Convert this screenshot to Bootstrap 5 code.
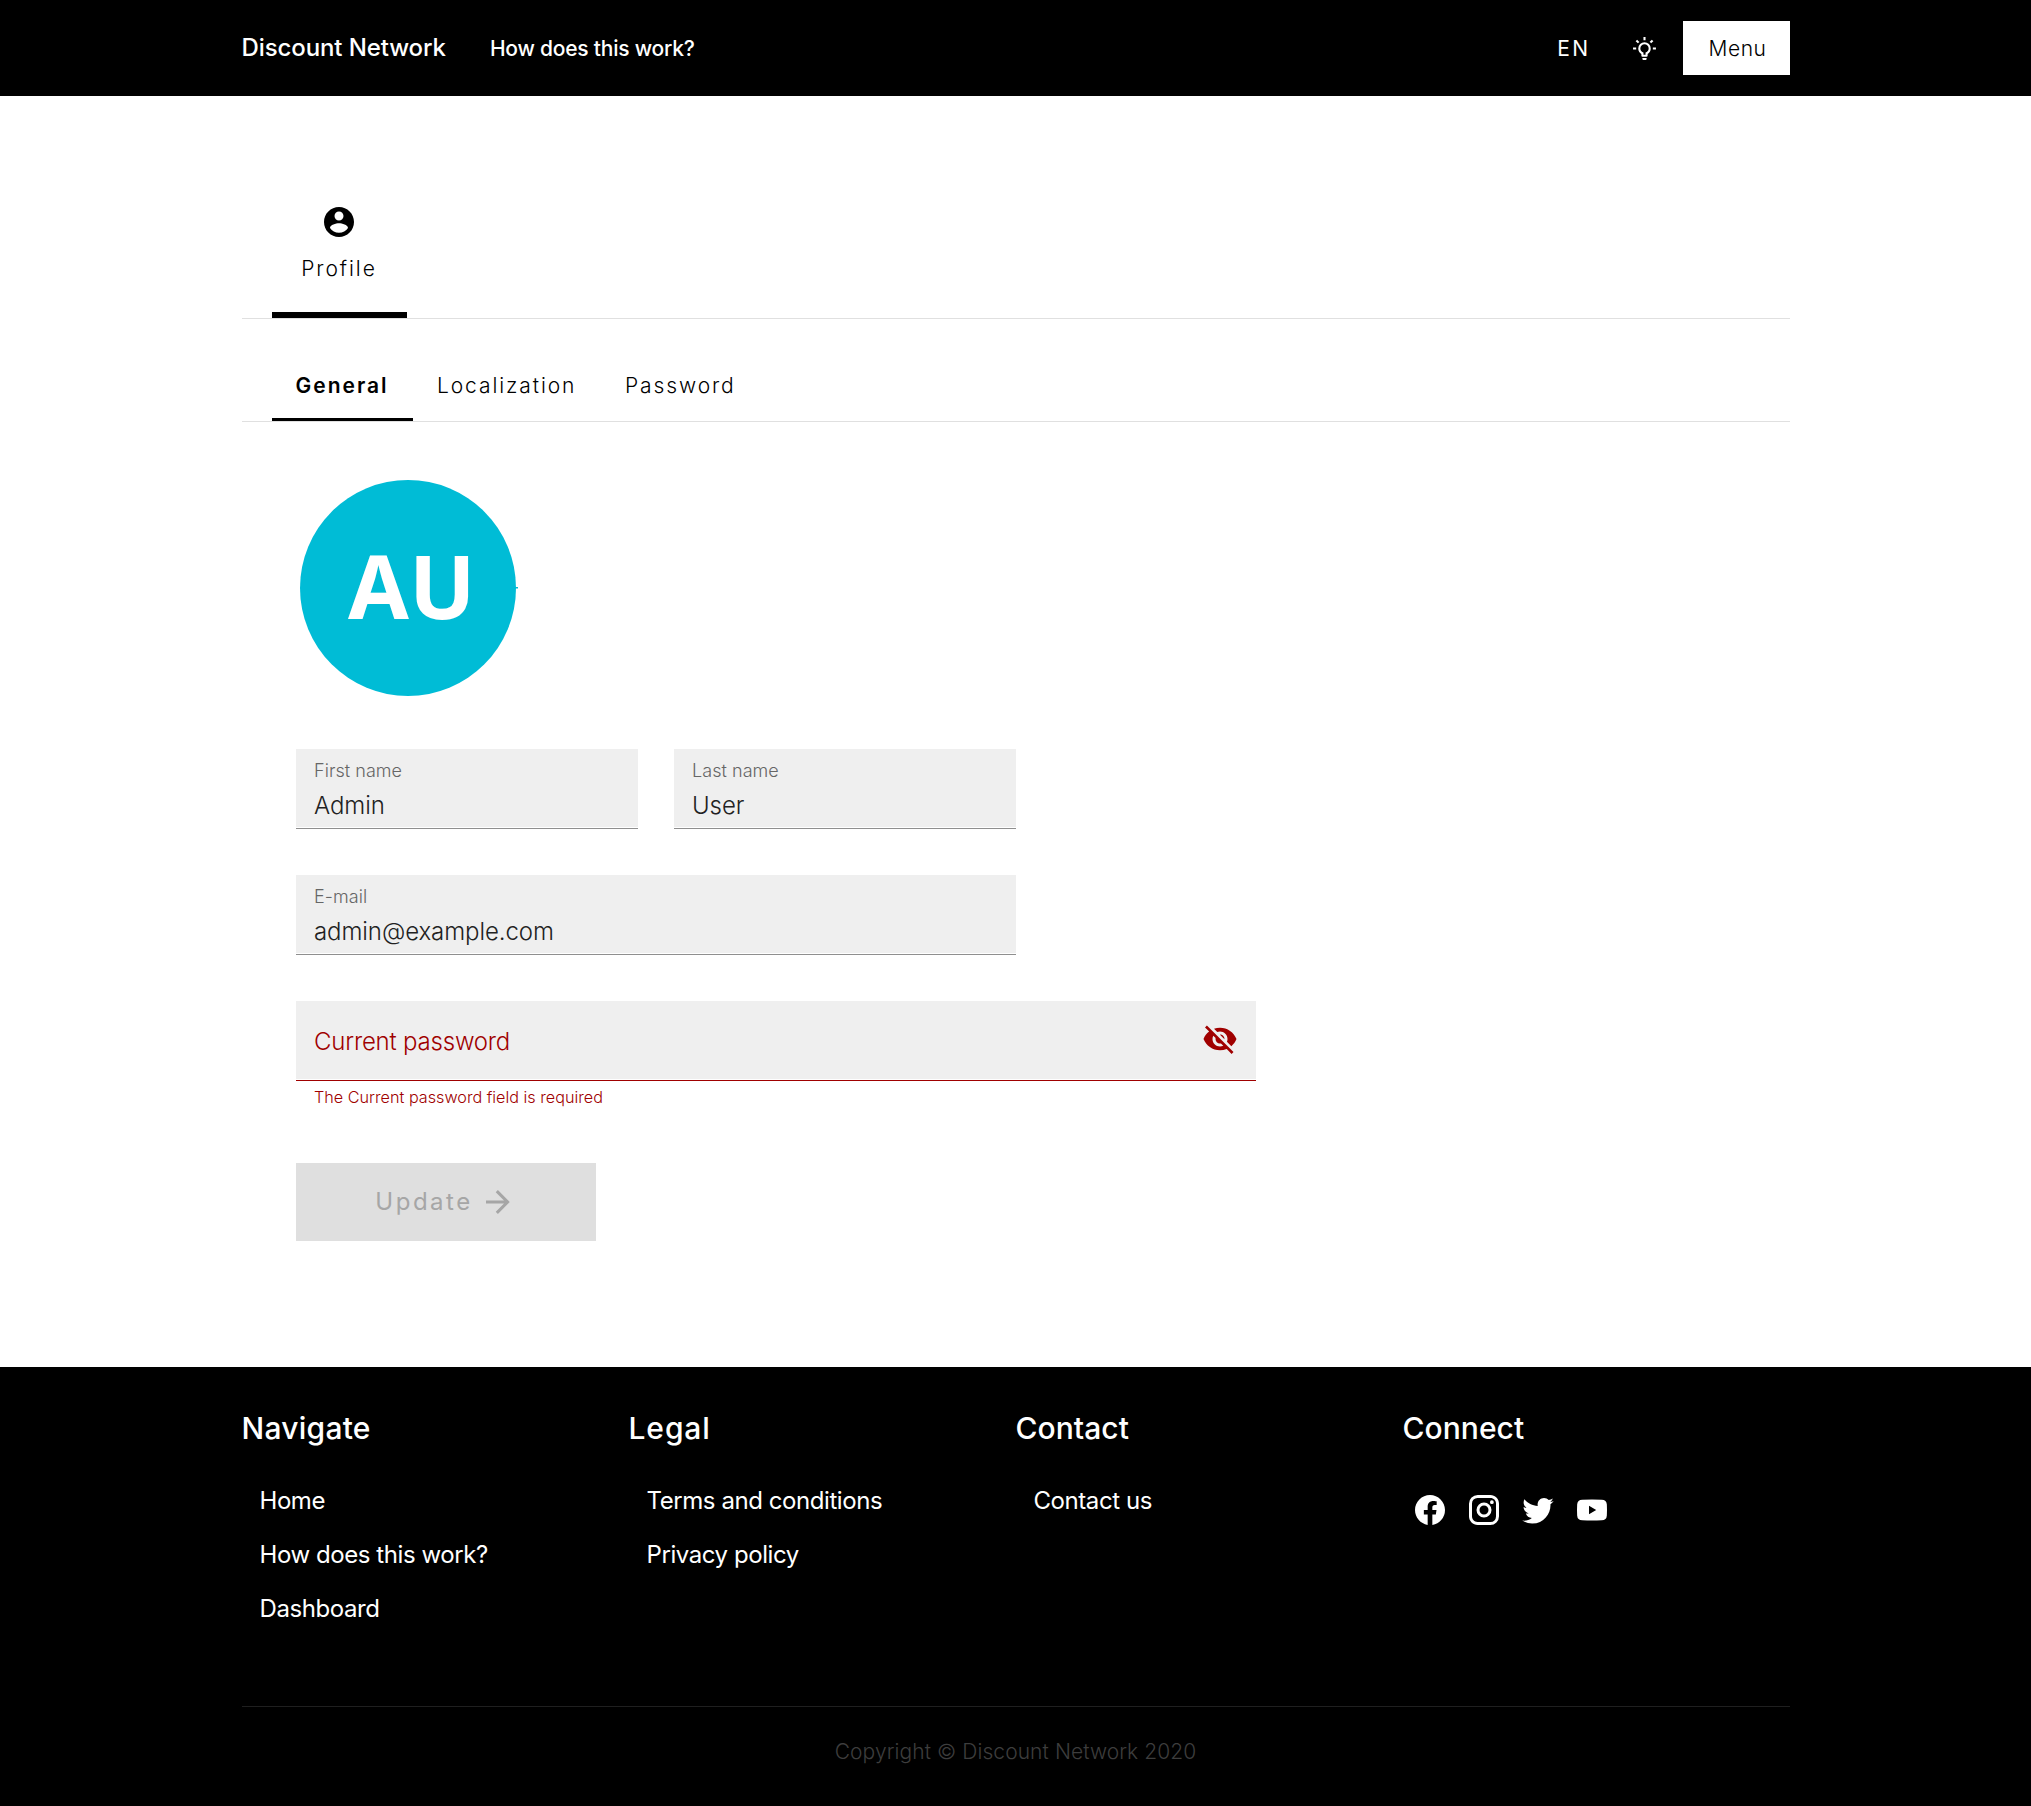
<!DOCTYPE html>
<html lang="en">
<head>
<meta charset="utf-8">
<meta name="viewport" content="width=device-width, initial-scale=1">
<title>Discount Network</title>
<link href="https://cdn.jsdelivr.net/npm/bootstrap@5.3.0/dist/css/bootstrap.min.css" rel="stylesheet">
<style>
body{font-family:Inter,Lato,sans-serif;color:#000;background:#fff;overflow-x:hidden}
a{color:inherit;text-decoration:none}
svg{display:block;flex:none;fill:currentColor}
.wrap{width:1548px;margin-left:241.5px}
.topbar{height:96px}
.brand{font-size:24px;font-weight:500;line-height:32px;letter-spacing:-.1px;margin-right:44px;padding-bottom:1px}
.toplink{font-size:21px;font-weight:500;line-height:32px;letter-spacing:-.22px;padding-top:2px}
.lang{font-size:21px;font-weight:400;line-height:32px;letter-spacing:2.4px;margin-right:41px;padding-top:2px}
.bulb{margin-right:26px}
.btn-menu{width:107px;height:54px;border-radius:0;background:#fff;color:#000;font-size:21px;line-height:32px;letter-spacing:.5px;font-weight:300;padding:12px 0 10px 3px;border:0}
.tabs-main{height:223px;padding:108px 0 0 30.5px;border-bottom:1px solid #e0e0e0}
.tab-main{width:135px;height:114px;border-bottom:6px solid #000;font-size:21px;line-height:30px;letter-spacing:1.95px;gap:14px;font-weight:300;padding-right:1px}
.tabs-sub{height:103px;padding:52px 0 0 30.5px;border-bottom:1px solid #e0e0e0;font-size:21px;line-height:30px;font-weight:300}
.tab-sub{height:50px;padding-left:24px;letter-spacing:1.9px}
.tab-sub.on{width:141px;font-weight:600;border-bottom:3px solid #000;letter-spacing:2px;padding-left:23.5px}
.tab-loc{width:188px}
.panel{padding:58px 0 126px 54.5px}
.avatar{margin:0 0 53px 4px}
.avatar text{font:700 88px "Noto Sans",sans-serif;fill:#fff}
.fields{gap:46px}
.fields-row{gap:36px}
.fld{height:80px;padding:10px 18px 0;background:linear-gradient(#efefef,#efefef) 0 0/100% 78px no-repeat;border-bottom:1px solid #8f8f8f;font-weight:300}
.fld label{display:block;font-size:18px;line-height:24px;color:#666;letter-spacing:.05px}
.fld .form-control{border:0;border-radius:0;background:none;box-shadow:none;padding:0;margin-top:7px;height:32px;font-size:24px;line-height:32px;font-weight:300;color:#222;letter-spacing:-.08px}
.fld-half{width:342px}
.fld-wide{width:720px}
.fld-full{width:960px;border-color:#a00000;color:#a00000;padding:0 18px}
.fld-full .form-control{color:#a00000;margin-top:2px;letter-spacing:-.2px}
.fld-full .form-control::placeholder{color:#a00000;opacity:1}
.fld-full svg{margin-bottom:3px}
.err{font-size:16.2px;line-height:24px;font-weight:300;color:#a00000;padding-left:18px;margin-top:4px;letter-spacing:0}
.btn-update{width:300px;height:78px;margin-top:54px;background:#dfdfdf;color:#a6a6a6;border:0;border-radius:0;font-size:24px;font-weight:400;line-height:32px;letter-spacing:2.5px;padding:0 1px 0 0;gap:7px}
.btn-update svg{margin-bottom:1px}
.foot{height:439px;padding-top:43px;font-weight:400}
.foot-cols{height:296px}
.foot-col{width:387px}
.foot-h{font-size:30px;line-height:36px;font-weight:500;margin:0 0 28px;letter-spacing:.05px}
.foot-h.loose{letter-spacing:.25px}
.foot-h.looser{letter-spacing:.9px}
.foot-a{display:block;font-size:24px;line-height:54px;padding-left:18px;letter-spacing:-.43px}
.social{padding-top:9px}
.social a{width:54px;height:54px}
.copy{border-top:1px solid #1f1f1f;padding-top:29px;font-size:21px;line-height:32px;font-weight:300;color:#3d3d3d;letter-spacing:.08px}
</style>
</head>
<body>
<nav class="topbar bg-black text-white">
  <div class="wrap h-100 d-flex align-items-center">
    <a href="#" class="brand">Discount Network</a>
    <a href="#" class="toplink">How does this work?</a>
    <a href="#" class="lang ms-auto">EN</a>
    <a href="#" class="bulb" aria-label="Theme"><svg width="25" height="25" viewBox="0 0 24 24"><path d="M20,11H23V13H20V11M1,11H4V13H1V11M13,1V4H11V1H13M4.92,3.5L7.05,5.64L5.63,7.05L3.5,4.93L4.92,3.5M16.95,5.63L19.07,3.5L20.5,4.93L18.37,7.05L16.95,5.63M12,6A6,6 0 0,1 18,12C18,14.22 16.79,16.16 15,17.2V19A1,1 0 0,1 14,20H10A1,1 0 0,1 9,19V17.2C7.21,16.16 6,14.22 6,12A6,6 0 0,1 12,6M14,21V22A1,1 0 0,1 13,23H11A1,1 0 0,1 10,22V21H14M11,18H13V15.87C14.73,15.43 16,13.86 16,12A4,4 0 0,0 12,8A4,4 0 0,0 8,12C8,13.86 9.27,15.43 11,15.87V18Z"/></svg></a>
    <button type="button" class="btn btn-menu">Menu</button>
  </div>
</nav>
<main class="wrap">
  <div class="tabs-main">
    <a href="#" class="tab-main d-flex flex-column align-items-center"><svg width="36" height="36" viewBox="0 0 24 24"><path d="M12 2C6.48 2 2 6.48 2 12s4.48 10 10 10 10-4.48 10-10S17.52 2 12 2zm0 3c1.66 0 3 1.34 3 3s-1.34 3-3 3-3-1.34-3-3 1.34-3 3-3zm0 14.2c-2.5 0-4.71-1.28-6-3.22.03-1.99 4-3.08 6-3.08 1.99 0 5.97 1.09 6 3.08-1.29 1.94-3.5 3.22-6 3.22z"/></svg><span>Profile</span></a>
  </div>
  <div class="tabs-sub d-flex">
    <a href="#" class="tab-sub on">General</a>
    <a href="#" class="tab-sub tab-loc">Localization</a>
    <a href="#" class="tab-sub">Password</a>
  </div>
  <form class="panel">
    <svg class="avatar" width="219" height="216" viewBox="0 0 219 216"><circle cx="108" cy="108" r="108" fill="#00bcd6"/><path fill="#00bcd6" d="M215 107h3v1.5h-3z"/><text x="48" y="139">AU</text></svg>
    <div class="fields d-flex flex-column">
      <div class="fields-row d-flex">
        <div class="fld fld-half"><label for="fn">First name</label><input id="fn" class="form-control" value="Admin"></div>
        <div class="fld fld-half"><label for="ln">Last name</label><input id="ln" class="form-control" value="User"></div>
      </div>
      <div class="fld fld-wide"><label for="em">E-mail</label><input id="em" class="form-control" value="admin@example.com"></div>
      <div class="fld fld-full d-flex align-items-center"><input class="form-control" type="password" placeholder="Current password" aria-label="Current password"><svg width="36" height="36" viewBox="0 0 24 24"><path d="M12 7c2.76 0 5 2.24 5 5 0 .65-.13 1.26-.36 1.83l2.92 2.92c1.51-1.26 2.7-2.89 3.43-4.75-1.73-4.39-6-7.5-11-7.5-1.4 0-2.74.25-3.98.7l2.16 2.16C10.74 7.13 11.35 7 12 7zM2 4.27l2.28 2.28.46.46C3.08 8.3 1.78 10.02 1 12c1.73 4.39 6 7.5 11 7.5 1.55 0 3.03-.3 4.38-.84l.42.42L19.73 22 21 20.73 3.27 3 2 4.27zM7.53 9.8l1.55 1.55c-.05.21-.08.43-.08.65 0 1.66 1.34 3 3 3 .22 0 .44-.03.65-.08l1.55 1.55c-.67.33-1.41.53-2.2.53-2.76 0-5-2.24-5-5 0-.79.2-1.53.53-2.2zm4.31-.78l3.15 3.15.02-.16c0-1.66-1.34-3-3-3l-.17.01z"/></svg></div>
    </div>
    <div class="err">The Current password field is required</div>
    <button type="button" class="btn btn-update d-flex align-items-center justify-content-center">Update <svg width="36" height="36" viewBox="0 0 24 24"><path d="M4,11V13H16L10.5,18.5L11.92,19.92L19.84,12L11.92,4.08L10.5,5.5L16,11H4Z"/></svg></button>
  </form>
</main>
<footer class="foot bg-black text-white">
  <div class="wrap">
    <div class="foot-cols d-flex">
      <div class="foot-col"><h4 class="foot-h loose">Navigate</h4><a href="#" class="foot-a">Home</a><a href="#" class="foot-a">How does this work?</a><a href="#" class="foot-a">Dashboard</a></div>
      <div class="foot-col"><h4 class="foot-h looser">Legal</h4><a href="#" class="foot-a">Terms and conditions</a><a href="#" class="foot-a">Privacy policy</a></div>
      <div class="foot-col"><h4 class="foot-h">Contact</h4><a href="#" class="foot-a">Contact us</a></div>
      <div class="foot-col"><h4 class="foot-h">Connect</h4>
        <div class="social d-flex">
          <a href="#" class="d-flex align-items-center justify-content-center" aria-label="Facebook"><svg width="36" height="36" viewBox="0 0 24 24"><path d="M12 2.04C6.5 2.04 2 6.53 2 12.06C2 17.06 5.66 21.21 10.44 21.96V14.96H7.9V12.06H10.44V9.85C10.44 7.34 11.93 5.96 14.22 5.96C15.31 5.96 16.45 6.15 16.45 6.15V8.62H15.19C13.95 8.62 13.56 9.39 13.56 10.18V12.06H16.34L15.89 14.96H13.56V21.96A10 10 0 0 0 22 12.06C22 6.53 17.5 2.04 12 2.04Z"/></svg></a>
          <a href="#" class="d-flex align-items-center justify-content-center" aria-label="Instagram"><svg width="36" height="36" viewBox="0 0 24 24"><path d="M7.8,2H16.2C19.4,2 22,4.6 22,7.8V16.2A5.8,5.8 0 0,1 16.2,22H7.8C4.6,22 2,19.4 2,16.2V7.8A5.8,5.8 0 0,1 7.8,2M7.6,4A3.6,3.6 0 0,0 4,7.6V16.4C4,18.39 5.61,20 7.6,20H16.4A3.6,3.6 0 0,0 20,16.4V7.6C20,5.61 18.39,4 16.4,4H7.6M17.25,5.5A1.25,1.25 0 0,1 18.5,6.75A1.25,1.25 0 0,1 17.25,8A1.25,1.25 0 0,1 16,6.75A1.25,1.25 0 0,1 17.25,5.5M12,7A5,5 0 0,1 17,12A5,5 0 0,1 12,17A5,5 0 0,1 7,12A5,5 0 0,1 12,7M12,9A3,3 0 0,0 9,12A3,3 0 0,0 12,15A3,3 0 0,0 15,12A3,3 0 0,0 12,9Z"/></svg></a>
          <a href="#" class="d-flex align-items-center justify-content-center" aria-label="Twitter"><svg width="36" height="36" viewBox="0 0 24 24"><path d="M22.46,6C21.69,6.35 20.86,6.58 20,6.69C20.88,6.16 21.56,5.32 21.88,4.31C21.05,4.81 20.13,5.16 19.16,5.36C18.37,4.5 17.26,4 16,4C13.65,4 11.73,5.92 11.73,8.29C11.73,8.63 11.77,8.96 11.84,9.27C8.28,9.09 5.11,7.38 3,4.79C2.63,5.42 2.42,6.16 2.42,6.94C2.42,8.43 3.17,9.75 4.33,10.5C3.62,10.5 2.96,10.3 2.38,10V10.03C2.38,12.11 3.86,13.85 5.82,14.24C5.46,14.34 5.08,14.39 4.69,14.39C4.42,14.39 4.15,14.36 3.89,14.31C4.43,16 6,17.26 7.89,17.29C6.43,18.45 4.58,19.13 2.56,19.13C2.22,19.13 1.88,19.11 1.54,19.07C3.44,20.29 5.7,21 8.12,21C16,21 20.33,14.46 20.33,8.79C20.33,8.6 20.33,8.42 20.32,8.23C21.16,7.63 21.88,6.87 22.46,6Z"/></svg></a>
          <a href="#" class="d-flex align-items-center justify-content-center" aria-label="YouTube"><svg width="36" height="36" viewBox="0 0 24 24"><path fill-rule="evenodd" d="M5.5,5.2Q12,4.8 18.5,5.2Q21.7,5.3 21.9,8.4Q22.1,12 21.9,15.6Q21.7,18.7 18.5,18.8Q12,19.2 5.5,18.8Q2.3,18.7 2.1,15.6Q1.9,12 2.1,8.4Q2.3,5.3 5.5,5.2ZM10,9.2V14.8L14.8,12Z"/></svg></a>
        </div>
      </div>
    </div>
    <div class="copy text-center">Copyright © Discount Network 2020</div>
  </div>
</footer>
<script src="https://cdn.jsdelivr.net/npm/bootstrap@5.3.0/dist/js/bootstrap.bundle.min.js"></script>
</body>
</html>
